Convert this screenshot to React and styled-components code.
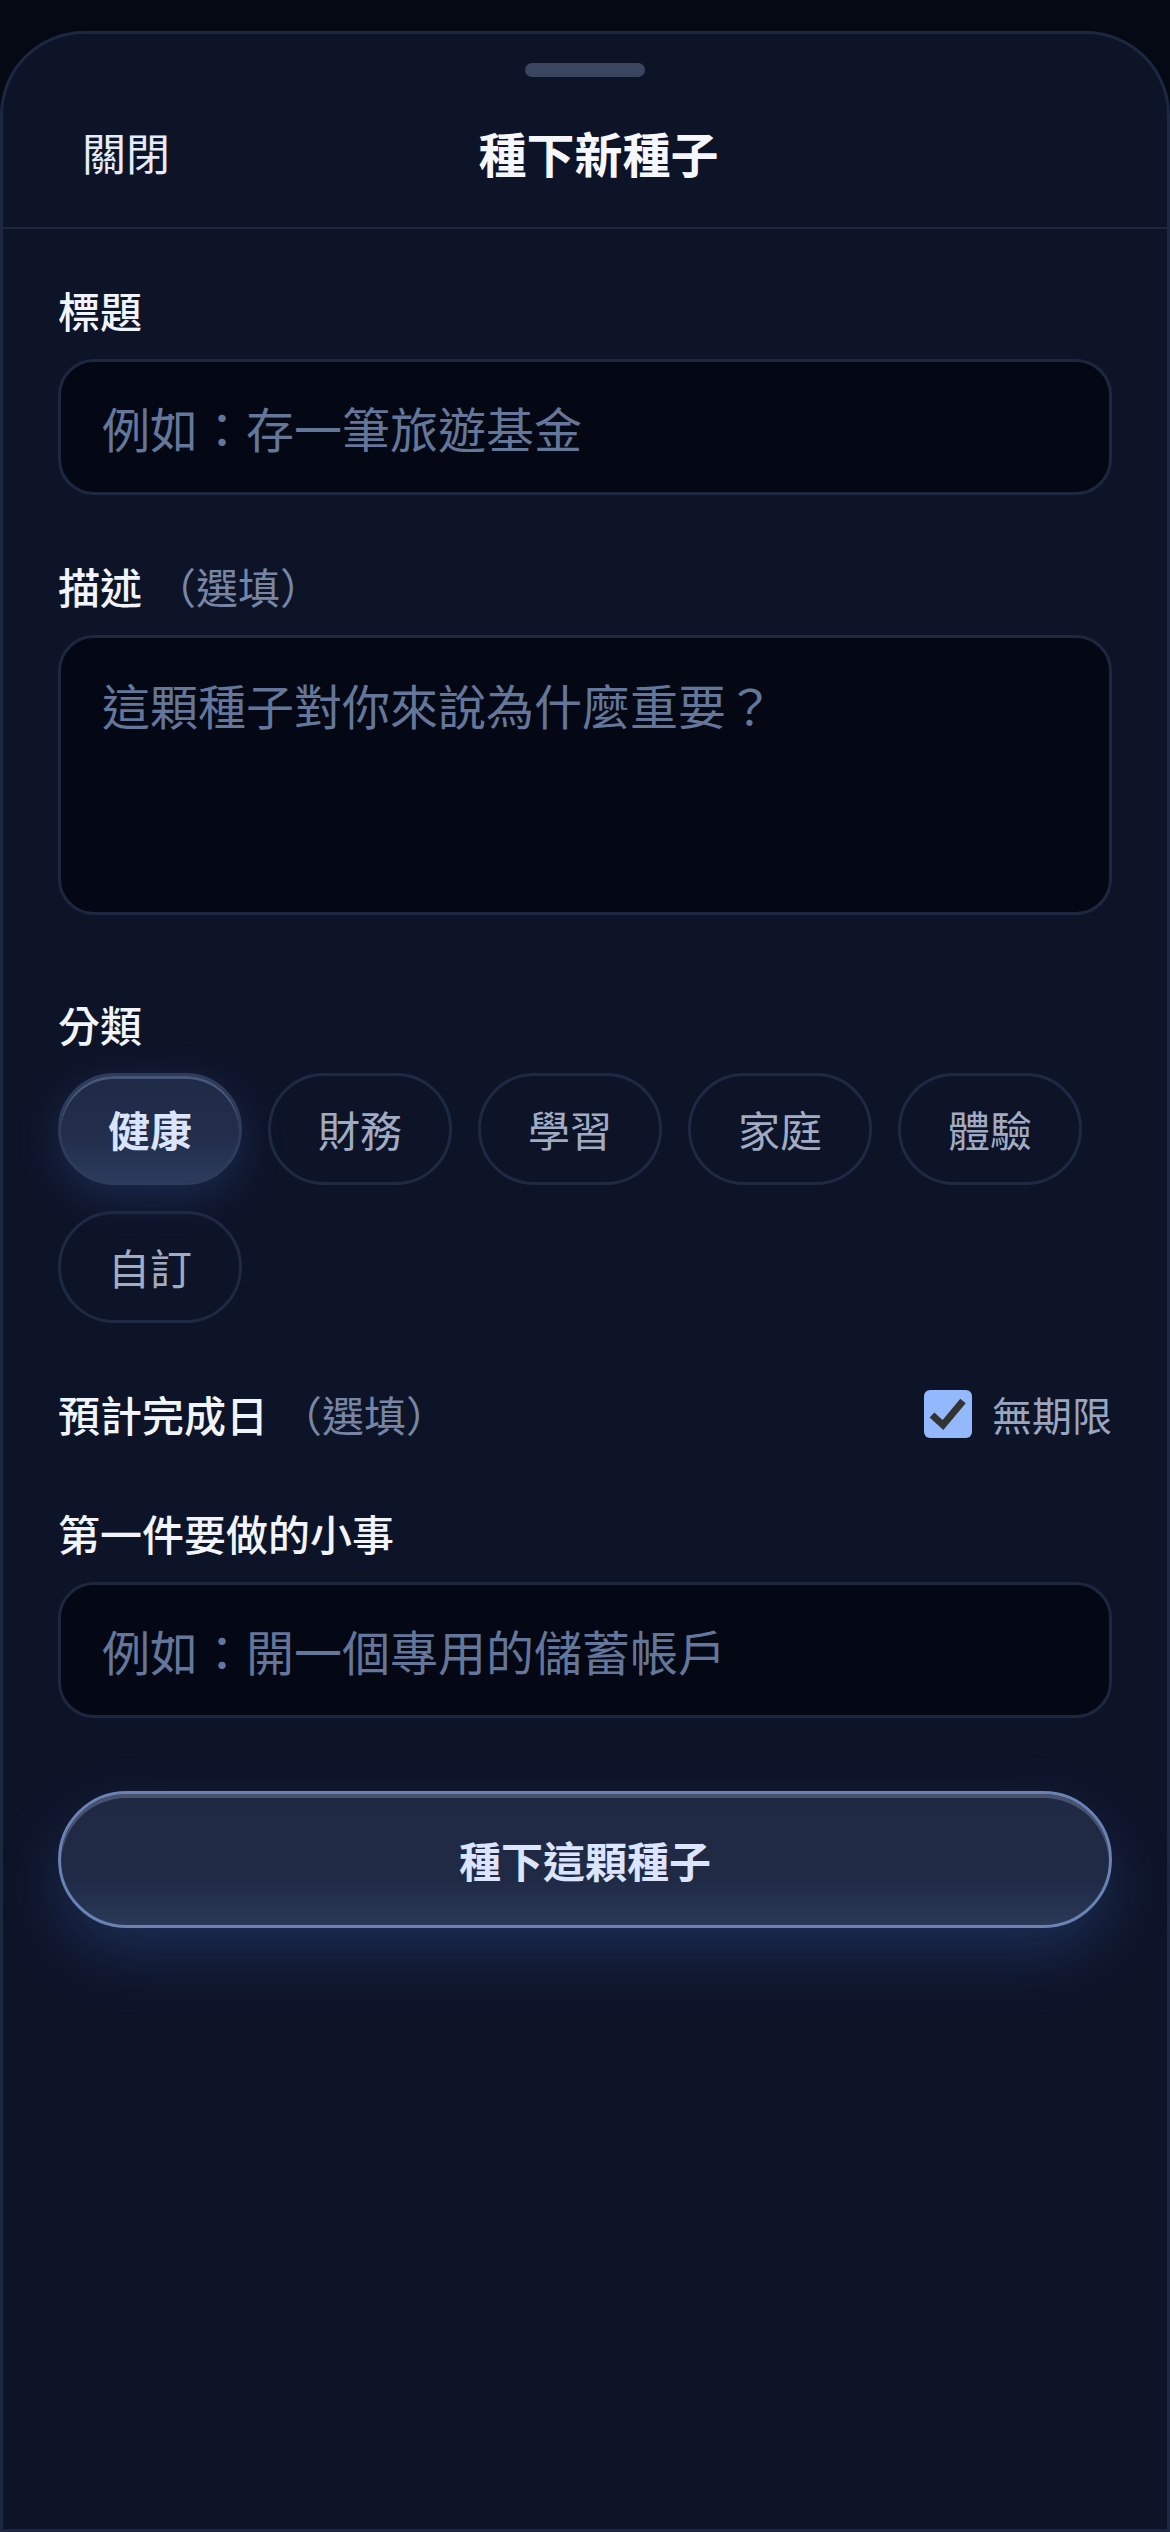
import React from 'react'
import styled, { createGlobalStyle } from 'styled-components'

const GlobalStyle = createGlobalStyle`
  * {
    box-sizing: border-box;
  }

  body {
    margin: 0;
    background: #040914;
    font-family: "Noto Sans CJK TC", "Noto Sans", sans-serif;
    -webkit-font-smoothing: antialiased;
  }
`

const categories = ['健康', '財務', '學習', '家庭', '體驗', '自訂']

const Page = styled.div`
  padding-top: 31px;
  min-height: 2532px;
`

const Sheet = styled.div`
  min-height: 2501px;
  background: #0e1428;
  border: 3px solid #1c2741;
  border-radius: 84px 84px 0 0;
  display: flex;
  flex-direction: column;
`

const Handle = styled.div`
  width: 120px;
  height: 14px;
  margin: 29px auto 0;
  border-radius: 7px;
  background: #3a4660;
`

const Header = styled.div`
  height: 152px;
  display: flex;
  align-items: center;
  padding: 0 76px 0 79px;
  border-bottom: 2px solid #1c2741;
`

const CloseButton = styled.button`
  background: none;
  border: none;
  padding: 0;
  font-family: inherit;
  font-size: 44px;
  line-height: 60px;
  color: #e6ebf6;
  cursor: pointer;
`

const Title = styled.h1`
  flex: 1;
  margin: 0;
  text-align: center;
  font-size: 48px;
  line-height: 64px;
  font-weight: 700;
  color: #f5f7fc;
`

const HeaderSpacer = styled.div`
  width: 64px;
`

const Form = styled.form`
  display: flex;
  flex-direction: column;
  gap: 63px;
  padding: 53px 55px 0;
`

const Field = styled.div`
  display: flex;
  flex-direction: column;
  gap: 21px;
  margin-top: ${(p) => p.$extra || 0}px;
`

const Label = styled.label`
  font-size: 42px;
  line-height: 56px;
  font-weight: 500;
  color: #f1f4fb;
`

const Optional = styled.span`
  margin-left: 12px;
  font-weight: 400;
  color: #7886a6;
`

const TextInput = styled.input`
  width: 100%;
  height: 136px;
  padding: 0 41px;
  border: 3px solid #1d2840;
  border-radius: 36px;
  background: #030814;
  font-family: inherit;
  font-size: 48px;
  color: #e6ebf6;
  outline: none;

  &::placeholder {
    color: #64779a;
  }
`

const TextArea = styled.textarea`
  display: block;
  width: 100%;
  height: 280px;
  padding: 34px 41px;
  border: 3px solid #1d2840;
  border-radius: 36px;
  background: #030814;
  font-family: inherit;
  font-size: 48px;
  line-height: 64px;
  color: #e6ebf6;
  outline: none;
  resize: none;

  &::placeholder {
    color: #64779a;
  }
`

const Chips = styled.div`
  display: flex;
  flex-wrap: wrap;
  gap: 26px;
`

const Chip = styled.button`
  height: 112px;
  padding: 0 47px;
  border-radius: 56px;
  font-family: inherit;
  font-size: 42px;
  line-height: 58px;
  cursor: pointer;
  border: 3px solid ${(p) => (p.$active ? '#2e3c5a' : '#1e2a43')};
  color: ${(p) => (p.$active ? '#dae4fd' : '#a1acc4')};
  font-weight: ${(p) => (p.$active ? 700 : 400)};
  background: ${(p) =>
    p.$active
      ? 'linear-gradient(180deg, #1f2a46 0%, #222e4c 60%, #2c3b5d 100%)'
      : 'transparent'};
  box-shadow: ${(p) =>
    p.$active
      ? 'inset 0 3px 0 rgba(120, 140, 185, 0.45), 0 12px 40px rgba(60, 100, 180, 0.28)'
      : 'none'};
`

const DateRow = styled.div`
  display: flex;
  align-items: center;
  justify-content: space-between;
  height: 56px;
`

const CheckLabel = styled.label`
  display: flex;
  align-items: center;
  gap: 20px;
  font-size: 40px;
  line-height: 56px;
  color: #9aa6c0;
  cursor: pointer;
`

const CheckBox = styled.span`
  width: 48px;
  height: 48px;
  border-radius: 6px;
  background: #93b8fb;
  display: flex;
  align-items: center;
  justify-content: center;
`

const SubmitButton = styled.button`
  margin-top: 10px;
  width: 100%;
  height: 137px;
  border-radius: 70px;
  border: 3px solid #6a82b4;
  background: linear-gradient(180deg, #1f2943 0%, #1f2a45 65%, #2a3958 100%);
  box-shadow: inset 0 4px 0 rgba(150, 160, 190, 0.35),
    0 26px 60px rgba(55, 95, 175, 0.32);
  font-family: inherit;
  font-size: 42px;
  font-weight: 700;
  color: #dbe5ff;
  cursor: pointer;
`

function App() {
  return (
    <Page>
      <GlobalStyle />
      <Sheet>
        <Handle />
        <Header>
          <CloseButton type="button">關閉</CloseButton>
          <Title>種下新種子</Title>
          <HeaderSpacer />
        </Header>
        <Form onSubmit={(e) => e.preventDefault()}>
          <Field>
            <Label>標題</Label>
            <TextInput placeholder="例如：存一筆旅遊基金" />
          </Field>

          <Field>
            <Label>
              描述<Optional>（選填）</Optional>
            </Label>
            <TextArea placeholder="這顆種子對你來說為什麼重要？" />
          </Field>

          <Field $extra={18}>
            <Label>分類</Label>
            <Chips>
              {categories.map((c, i) => (
                <Chip type="button" key={c} $active={i === 0}>
                  {c}
                </Chip>
              ))}
            </Chips>
          </Field>

          <DateRow>
            <Label>
              預計完成日<Optional>（選填）</Optional>
            </Label>
            <CheckLabel>
              <CheckBox>
                <svg width="48" height="48" viewBox="0 0 48 48">
                  <path
                    d="M8 25 L19 35 L39 11"
                    fill="none"
                    stroke="#333"
                    strokeWidth="7"
                  />
                </svg>
              </CheckBox>
              無期限
            </CheckLabel>
          </DateRow>

          <Field>
            <Label>第一件要做的小事</Label>
            <TextInput placeholder="例如：開一個專用的儲蓄帳戶" />
          </Field>

          <SubmitButton type="submit">種下這顆種子</SubmitButton>
        </Form>
      </Sheet>
    </Page>
  )
}

export default App
